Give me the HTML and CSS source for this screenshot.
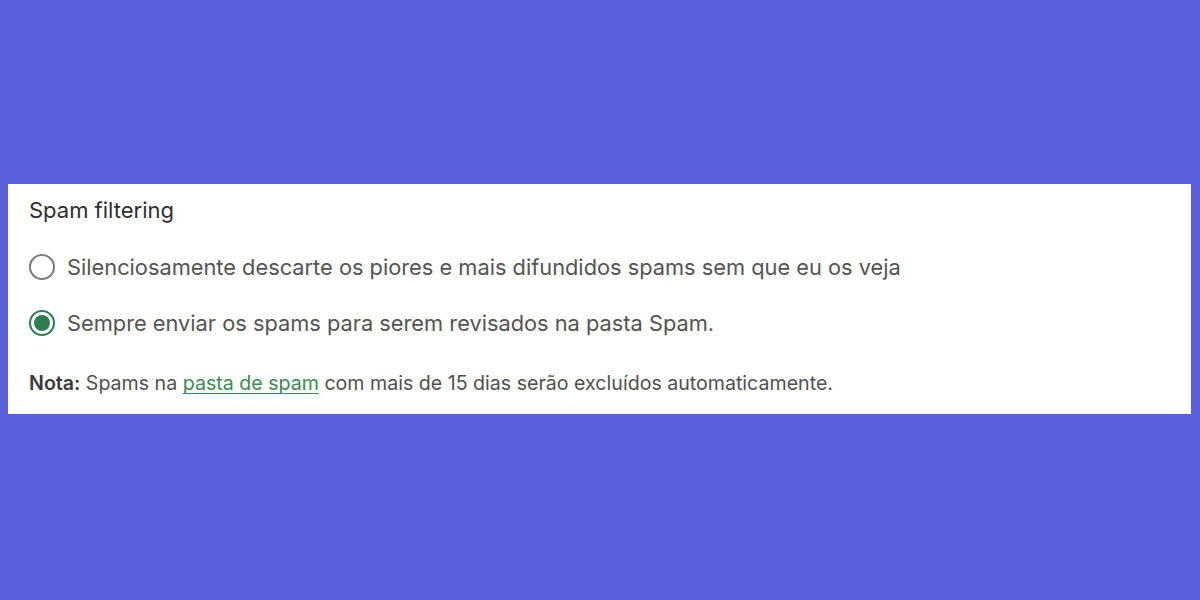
FILE: index.html
```html
<!DOCTYPE html>
<html lang="pt">
<head>
<meta charset="utf-8">
<link rel="stylesheet" href="styles.css">
</head>
<body>
<div class="stage">
  <section class="panel">
    <h2 class="title">Spam filtering</h2>
    <div class="options">
      <label class="option">
        <span class="radio"></span>
        <span class="label">Silenciosamente descarte os piores e mais difundidos spams sem que eu os veja</span>
      </label>
      <label class="option">
        <span class="radio checked"></span>
        <span class="label">Sempre enviar os spams para serem revisados na pasta Spam.</span>
      </label>
    </div>
    <p class="note"><strong>Nota:</strong> Spams na <a href="#" class="link">pasta de spam</a> com mais de 15 dias serão excluídos automaticamente.</p>
  </section>
</div>
</body>
</html>
```
FILE: styles.css
```css
html, body {
  margin: 0;
  padding: 0;
  background: #5b5fdb;
}
.stage {
  width: 1200px;
  height: 600px;
  box-sizing: border-box;
  padding: 184px 9px 0 8px;
  font-family: Inter, "Noto Sans", sans-serif;
}
.panel {
  background: #ffffff;
  height: 230px;
  box-sizing: border-box;
  padding: 13px 20px 0 21px;
}
.title {
  margin: 0;
  font-size: 22px;
  font-weight: 400;
  color: #2e2e2e;
  line-height: 26px;
}
.options {
  display: flex;
  flex-direction: column;
  gap: 30px;
  margin-top: 31px;
}
.option {
  display: flex;
  align-items: center;
  gap: 12px;
  height: 26px;
}
.radio {
  width: 26px;
  height: 26px;
  box-sizing: border-box;
  border: 2px solid #7a7a7a;
  border-radius: 50%;
  flex: none;
  position: relative;
}
.radio.checked {
  border-color: #2e7d4f;
}
.radio.checked::after {
  content: "";
  position: absolute;
  left: 3px;
  top: 3px;
  width: 16px;
  height: 16px;
  border-radius: 50%;
  background: #2e7d4f;
}
.label {
  font-size: 21.8px;
  line-height: 26px;
  color: #545454;
}
.note {
  margin: 35px 0 0;
  font-size: 19.6px;
  line-height: 24px;
  color: #505050;
}
.note strong {
  font-weight: 600;
  color: #3a3a3a;
}
.link {
  color: #3e8a52;
  text-decoration: underline;
  text-decoration-thickness: 1px;
  text-decoration-skip-ink: none;
  text-underline-offset: 3px;
}
```
